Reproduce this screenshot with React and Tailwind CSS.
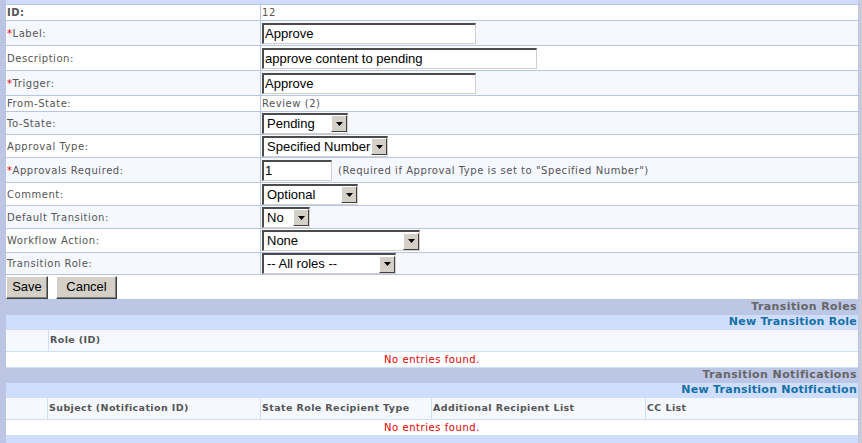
import React from 'react';

const LINE = 'border-b border-[#b8c5e7]';

const Label = ({ children, req, bold }) => (
  <div className={`flex items-center pl-[1px] border-r border-[#b8c5e7] text-[#555] ${bold ? 'font-bold' : ''}`}>
    {req && <span className="text-[#e00000]">*</span>}
    {children}
  </div>
);

const TextBox = ({ value, w }) => (
  <div
    className={`${w} h-[21px] bg-white border-t-2 border-l-2 border-t-[#4b4b4b] border-l-[#4b4b4b] border-b border-r border-b-[#d4d0c8] border-r-[#d4d0c8] flex items-center pl-[1px] text-black text-[13px] tracking-normal font-['Liberation_Sans',Arial,sans-serif]`}
  >
    {value}
  </div>
);

const Select = ({ value, w }) => (
  <div
    className={`${w} h-[21px] bg-white border-t-2 border-l-2 border-t-[#4b4b4b] border-l-[#4b4b4b] border-b border-r border-b-[#d4d0c8] border-r-[#d4d0c8] flex items-center text-black text-[13px] tracking-normal font-['Liberation_Sans',Arial,sans-serif]`}
  >
    <span className="flex-1 pl-[3px] whitespace-nowrap overflow-hidden">{value}</span>
    <span className="w-[16px] h-[17px] bg-[#d4d0c8] border-t border-l border-t-white border-l-white border-b border-r border-b-[#404040] border-r-[#404040] flex items-center justify-center">
      <svg width="7" height="4" viewBox="0 0 7 4"><path d="M0 0h7L3.5 4z" fill="#000" /></svg>
    </span>
  </div>
);

const Row = ({ h, alt, label, req, bold, children }) => (
  <div className={`grid grid-cols-[255px_1fr] ${h} ${alt ? 'bg-[#f5f8ff]' : 'bg-white'} ${LINE}`}>
    <Label req={req} bold={bold}>{label}</Label>
    <div className="flex items-center pl-[1px]">{children}</div>
  </div>
);

const Button = ({ children, w }) => (
  <div className={`${w} h-[23px] bg-[#d4d0c8] border border-t-white border-l-white border-b-[#404040] border-r-[#404040] shadow-[inset_-1px_-1px_0_#808080] flex items-center justify-center text-black text-[13px] tracking-normal font-['Liberation_Sans',Arial,sans-serif]`}>
    {children}
  </div>
);

const Section = ({ title, link, cols, widths }) => (
  <div>
    <div className="h-[15px] bg-[#bcc6e5] flex items-center justify-end pr-[1px] text-[11px] font-bold tracking-[0.4px] text-[#666]">{title}</div>
    <div className="h-[15px] bg-[#cfdefd] flex items-center justify-end pr-[1px] text-[11px] font-bold tracking-[0.25px] text-[#1570a6]">{link}</div>
    <div className={`grid ${widths} h-[22px] bg-[#f5f8ff] border-b border-[#d2def6]`}>
      <div className="border-r border-[#d2def6]" />
      {cols.map((c, i) => (
        <div key={c} className={`flex items-center pl-[1px] text-[9.5px] font-bold tracking-[0.4px] text-[#555] ${i < cols.length - 1 ? 'border-r border-[#d2def6]' : ''}`}>{c}</div>
      ))}
    </div>
    <div className="h-[16px] bg-white flex items-center justify-center text-[10px] text-[#e00000] border-b border-[#cfdefd]">No entries found.</div>
  </div>
);

export default function App() {
  return (
    <div className="w-[862px] h-[443px] flex bg-[#cfdcfb] font-['DejaVu_Sans',Verdana,sans-serif] text-[10px] tracking-[0.55px] overflow-hidden">
      <div className="w-[6px] bg-[#bcc6e4]" />
      <div className="flex-1 flex flex-col pt-[4px]">
        <div className="border-t border-[#b8c5e7]">
          <Row h="h-[16px]" label="ID:" bold>
            <span className="text-[#555]">12</span>
          </Row>
          <Row h="h-[25px]" alt label="Label:" req>
            <TextBox value="Approve" w="w-[214px]" />
          </Row>
          <Row h="h-[25px]" label="Description:">
            <TextBox value="approve content to pending" w="w-[275px]" />
          </Row>
          <Row h="h-[25px]" alt label="Trigger:" req>
            <TextBox value="Approve" w="w-[214px]" />
          </Row>
          <Row h="h-[16px]" label="From-State:">
            <span className="text-[#555]">Review (2)</span>
          </Row>
          <Row h="h-[23px]" alt label="To-State:">
            <Select value="Pending" w="w-[86px]" />
          </Row>
          <Row h="h-[23px]" label="Approval Type:">
            <Select value="Specified Number" w="w-[126px]" />
          </Row>
          <Row h="h-[25px]" alt label="Approvals Required:" req>
            <TextBox value="1" w="w-[70px]" />
            <span className="ml-[6px] text-[#555]">(Required if Approval Type is set to "Specified Number")</span>
          </Row>
          <Row h="h-[23px]" label="Comment:">
            <Select value="Optional" w="w-[96px]" />
          </Row>
          <Row h="h-[23px]" alt label="Default Transition:">
            <Select value="No" w="w-[48px]" />
          </Row>
          <Row h="h-[24px]" label="Workflow Action:">
            <Select value="None" w="w-[158px]" />
          </Row>
          <Row h="h-[22px]" alt label="Transition Role:">
            <Select value="-- All roles --" w="w-[134px]" />
          </Row>
        </div>
        <div className="h-[25px] bg-white flex items-center gap-[8px] border-b border-[#b8c5e7]">
          <Button w="w-[42px]">Save</Button>
          <Button w="w-[61px]">Cancel</Button>
        </div>
        <Section
          title="Transition Roles"
          link="New Transition Role"
          cols={['Role (ID)']}
          widths="grid-cols-[43px_1fr]"
        />
        <Section
          title="Transition Notifications"
          link="New Transition Notification"
          cols={['Subject (Notification ID)', 'State Role Recipient Type', 'Additional Recipient List', 'CC List']}
          widths="grid-cols-[42px_213px_171px_214px_1fr]"
        />
      </div>
      <div className="w-[1px] bg-[#b8c5e7]" />
      <div className="w-[3px] bg-[#c9ccd8]" />
    </div>
  );
}
